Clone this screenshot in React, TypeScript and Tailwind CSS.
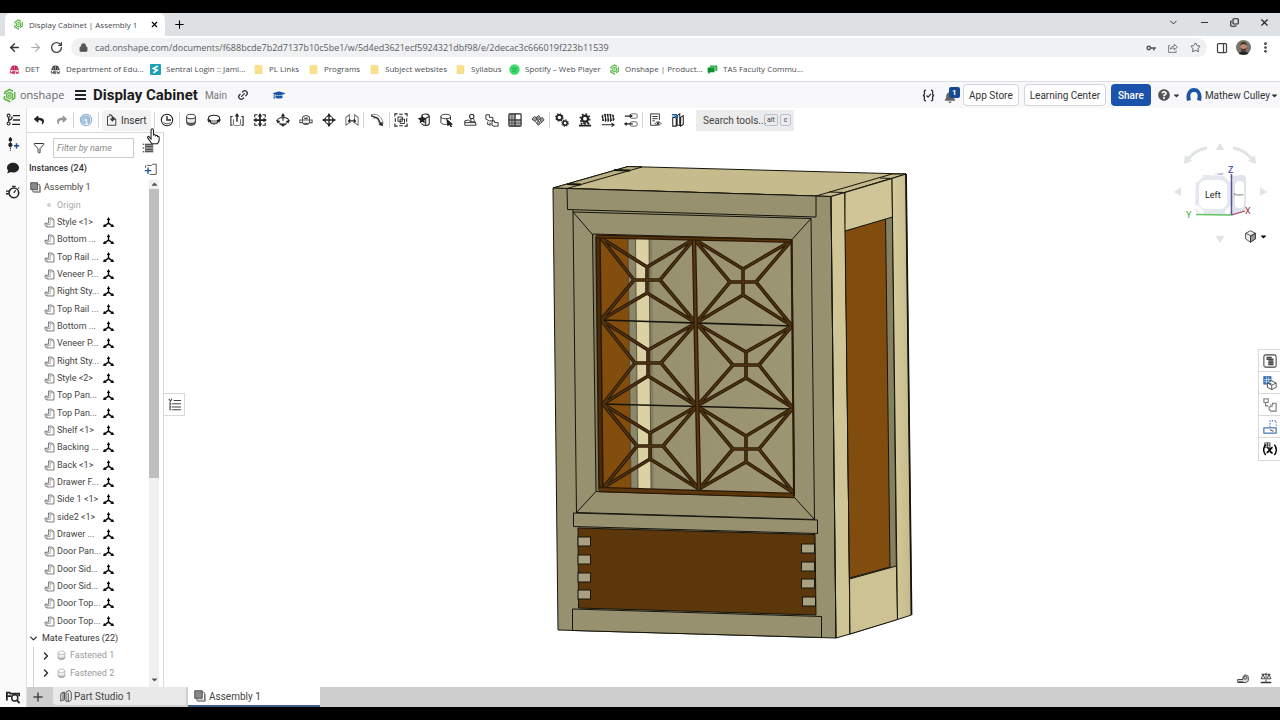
import type { ReactNode } from 'react';
import {
  ArrowLeft,
  ArrowRight,
  ChevronDown,
  ChevronRight,
  Copy,
  Filter,
  Link2,
  Lock,
  Minus,
  MoreVertical,
  PanelRight,
  Plus,
  RotateCw,
  Star,
  X,
} from 'lucide-react';
import { FaBell, FaCaretDown, FaComment, FaGraduationCap, FaQuestionCircle, FaReply, FaShare } from 'react-icons/fa';
import clsx from 'clsx';

type GlyphProps = { children: ReactNode; className?: string };

// All small drawings share a 16x16 grid
function Glyph({ children, className = 'size-[14px]' }: GlyphProps) {
  return (
    <svg viewBox="0 0 16 16" fill="none" stroke="currentColor" strokeWidth="1.2" className={clsx('shrink-0', className)} aria-hidden="true">
      {children}
    </svg>
  );
}

const OnshapeMark = ({ className }: { className?: string }) => (
  <Glyph className={className}>
    <path d="M3 4.5 8 1.5l5.5 3v6L8 14.5l-5.5-3z" stroke="#5fb548" strokeWidth="1.8" strokeDasharray="10 2" />
    <path d="M8 4.7 11 6.4v3.4L8 11.5 5 9.8V6.4z" stroke="#5fb548" strokeWidth="1.5" />
    <circle cx="8" cy="8" r="1" stroke="#5fb548" />
  </Glyph>
);

const WaratahIcon = ({ color }: { color: string }) => (
  <Glyph className="size-[11px]">
    <path d="M2 9c0-5 3-7 6-7s6 2 6 7z" fill={color} stroke="none" />
    <path d="M5 8 4 5M8 8V3M11 8l1-3" stroke="#fff" strokeWidth=".7" />
    <path d="M2 14v-3.5L5 14v-3.5M6.5 14v-3.5H9M6.5 12.2H9M6.5 14H9M10 10.5l1 3.5 1-2.5 1 2.5 1-3.5" stroke={color} />
  </Glyph>
);

const FolderIcon = () => (
  <Glyph className="size-[11px]">
    <path d="M3 2h9l1 1v11H3z" fill="#fbe08a" stroke="#f0d37a" strokeWidth=".8" />
  </Glyph>
);

const bookmarks = [
  { name: 'DET', width: 'w-[41px]', icon: <WaratahIcon color="#c4164a" /> },
  { name: 'Department of Edu...', width: 'w-[100px]', icon: <WaratahIcon color="#444" /> },
  {
    name: 'Sentral Login :: Jami...',
    width: 'w-[103px]',
    icon: (
      <Glyph className="size-[11px]">
        <rect width="16" height="16" rx="1.5" fill="#1ba0b8" stroke="none" />
        <path d="M11.5 3 5 6.5l5.5 2.5L5 13" stroke="#fff" strokeWidth="2.4" />
      </Glyph>
    ),
  },
  { name: 'PL Links', width: 'w-[55px]', icon: <FolderIcon /> },
  { name: 'Programs', width: 'w-[61px]', icon: <FolderIcon /> },
  { name: 'Subject websites', width: 'w-[86px]', icon: <FolderIcon /> },
  { name: 'Syllabus', width: 'w-[54px]', icon: <FolderIcon /> },
  {
    name: 'Spotify – Web Player',
    width: 'w-[100px]',
    icon: (
      <Glyph className="size-[11px]">
        <circle cx="8" cy="8" r="7.5" fill="#3ddc6b" stroke="none" />
        <path d="M4 6.3c3-.8 5.5-.6 8 .7M4.500 8.700c2.5-.6 4.600-.4 6.500.6M5 11c2-.4 3.500-.3 5 .5" stroke="#25a84c" />
      </Glyph>
    ),
  },
  { name: 'Onshape | Product...', width: 'w-[98px]', icon: <OnshapeMark className="size-[11px]" /> },
  {
    name: 'TAS Faculty Commu...',
    width: 'w-[100px]',
    icon: (
      <Glyph className="size-[11px]">
        <path d="M4 2h11v8h-3V5H4z" fill="#2fb34a" stroke="none" />
        <path d="M1 5h10v7H5l-3 3v-3H1z" fill="#0c8f2c" stroke="none" />
      </Glyph>
    ),
  },
];

const Cylinder = () => (
  <>
    <path d="M3 4v7c0 4 10 4 10 0V4" fill="#e8e8e8" strokeWidth="1" />
    <path d="M3 9c1 3 9 3 10 0v2c0 4-10 4-10 0z" fill="#555" stroke="none" />
    <ellipse cx="8" cy="4" rx="5" ry="2.5" fill="#fff" strokeWidth="1" />
  </>
);

type Tool = { name: string; art: ReactNode };

const mateTools: Tool[] = [
  { name: 'Fastened', art: <Cylinder /> },
  {
    name: 'Revolute',
    art: (
      <>
        <ellipse cx="8" cy="6" rx="6.5" ry="3.5" />
        <path d="M4 8v3c1 2 7 2 8 0V8" fill="#aaa" />
        <path d="M0 7l2 4 3-3zM16 7l-2 4-3-3z" fill="currentColor" stroke="none" />
      </>
    ),
  },
  {
    name: 'Slider',
    art: (
      <>
        <path d="M3 4H1v10h2M13 4h2v10h-2" />
        <path d="M4 7v6c1 2 7 2 8 0V7" stroke="#777" />
        <path d="M8 2v8" strokeWidth="1.6" />
        <path d="M8 0 5.5 4h5z" fill="currentColor" stroke="none" />
      </>
    ),
  },
  {
    name: 'Planar',
    art: (
      <>
        <path d="M2 5V2h3M11 2h3v3M14 11v3h-3M5 14H2v-3" strokeWidth="1.2" />
        <path d="M8 2v12M2 8h12" strokeWidth="2" />
        <path d="M8 0 5.5 4h5zM8 16l-2.500-4h5zM0 8l4-2.500v5zM16 8l-4-2.500v5z" fill="currentColor" stroke="none" />
      </>
    ),
  },
  {
    name: 'Cylindrical',
    art: (
      <>
        <path d="M1.5 9c0-5 13-5 13 0M4 11c1 4 7 4 8 0M8 3v6" />
        <path d="M8 0 5.5 4h5zM0 8l2 4 3-3zM16 8l-2 4-3-3zM5.5 12h5L8 16z" fill="currentColor" stroke="none" />
      </>
    ),
  },
  {
    name: 'Pin slot',
    art: (
      <g stroke="#555">
        <path d="M4 5c2-3 6-3 8 0v3H4zM1 8h3v3H1zM12 8h3v3h-3zM4 11c2 3 6 3 8 0" />
        <path d="M6 6h4M6 12h4" strokeWidth="2" />
      </g>
    ),
  },
  {
    name: 'Ball',
    art: (
      <>
        <circle cx="8" cy="8" r="4.5" />
        <path d="M8 1v14M1 8h14" strokeWidth="1.5" />
        <path d="M8 0 6 3.500h4zM8 16l-2-3.500h4zM0 8l3.500-2v4zM16 8l-3.500-2v4z" fill="currentColor" stroke="none" />
      </>
    ),
  },
  {
    name: 'Parallel',
    art: (
      <>
        <path d="M1 14V5l4-3v9zM15 14V5l-4-3v9z" stroke="#777" />
        <path d="M4 9h8M6 7 4 9l2 2M10 7l2 2-2 2" />
      </>
    ),
  },
];

const groupTools: Tool[] = [
  {
    name: 'Group',
    art: (
      <>
        <path d="M1 4V1h3M12 1h3v3M15 12v3h-3M4 15H1v-3M6 1.500h4M6 14.500h4M1.500 6v4M14.500 6v4" strokeWidth="1.2" />
        <path d="M4.500 4.500h5v5h-5zM7 7h5v5H7z" strokeWidth="1" />
      </>
    ),
  },
  {
    name: 'Mate connector',
    art: (
      <>
        <path d="M5 3c3-3 9-2 9 1v8c0 3-7 3-9 0" />
        <path d="M10 6l4-2M10 6v8" />
        <path d="M6 2l1.500 3L11 6 8.500 8.500 9 12l-3-2-3 2 .5-3.500L1 6l3.500-1z" fill="currentColor" stroke="none" />
      </>
    ),
  },
  {
    name: 'Select other',
    art: (
      <>
        <path d="M1 4v7c1 2 6 3 9 1M12 8V4" strokeWidth="1" />
        <ellipse cx="6.5" cy="4" rx="5.5" ry="2.5" strokeWidth="1" />
        <path d="M7 6l8 7-2.500.3L14 16l-2 .4-1-2.700L8.500 15z" fill="currentColor" stroke="none" />
      </>
    ),
  },
  {
    name: 'Snap',
    art: (
      <>
        <circle cx="10" cy="4" r="2.5" />
        <path d="M9 6v4M12 6l1 3M2 14V9l4-1 3 2h5l1 4zM2 11h12" strokeWidth="1" />
      </>
    ),
  },
  {
    name: 'Replicate',
    art: (
      <>
        <path d="M1 2h4v3h4v4H5L1 7zM8 9h3v2h4v4H9l-1-2z" strokeWidth="1" />
        <path d="M3 10v3h3M5 11l2 2-2 2" strokeWidth="1" />
      </>
    ),
  },
  {
    name: 'Linear pattern',
    art: (
      <>
        <rect x="1" y="1" width="14" height="14" rx="1" fill="#aaa" />
        <path d="M9 2h5v5H9z" fill="#fff" stroke="none" />
        <path d="M8 1v14M1 8h14" />
        <path d="M4.500 1v14M1 11.500h14" strokeWidth=".6" />
      </>
    ),
  },
  {
    name: 'Exploded view',
    art: (
      <g stroke="#444" strokeWidth="1">
        <path d="M1 7l3-3 3 2-2 4zM6 5l3-2 2 3-3 3zM10 7l3-2 2 3-3 3zM6 11l3-2 2 3-3 2z" fill="#999" />
      </g>
    ),
  },
];

const relationTools: Tool[] = [
  {
    name: 'Gear relation',
    art: (
      <>
        <circle cx="5" cy="5" r="3" strokeWidth="2" />
        <circle cx="5" cy="5" r="4.2" strokeDasharray="1.6 1.7" />
        <circle cx="11.5" cy="11.5" r="2.4" strokeWidth="1.8" />
        <circle cx="11.5" cy="11.5" r="3.7" strokeDasharray="1.5 1.4" />
      </>
    ),
  },
  {
    name: 'Rack and pinion',
    art: (
      <>
        <circle cx="8" cy="6.5" r="3.4" strokeWidth="2.4" />
        <circle cx="8" cy="6.5" r="5.4" strokeWidth="1.8" strokeDasharray="2 2.2" />
        <path d="M1 14.500h14M3 12h2M7 12h2M11 12h2" strokeWidth="2" />
      </>
    ),
  },
  {
    name: 'Screw relation',
    art: (
      <>
        <path d="M1 3l2 6M4 1l2 8M7 1l2 8M10 1l2 8M13 2l2 6M2 2v7M5 1v9M8 1v9M11 1v9M14 2v7" strokeWidth="1.3" />
        <path d="M1 13.500h13M12 11.500l3 2-3 2" />
      </>
    ),
  },
  {
    name: 'Linear relation',
    art: (
      <g stroke="#555">
        <rect x="7" y="1" width="8" height="5" rx="1.5" strokeWidth="1" />
        <rect x="7" y="10" width="8" height="5" rx="1.5" strokeWidth="1" />
        <path d="M1 3.500h8M1 12.500h9M7 2l2 1.500L7 5M3 11l-2 1.500L3 14" stroke="#222" strokeWidth="1.4" />
      </g>
    ),
  },
];

const viewTools: Tool[] = [
  {
    name: 'Named positions',
    art: (
      <>
        <path d="M10 14H3V1h10v7M5 4h6M5 6.500h6M5 9h3" strokeWidth="1" />
        <path d="M8 12c2-2.500 5-2.500 7 0-2 2.500-5 2.500-7 0z" strokeWidth="1" />
        <circle cx="11.5" cy="12" r=".8" />
      </>
    ),
  },
  {
    name: 'Display states',
    art: (
      <>
        <path d="M2 5h4v10H2zM7 3l3-2v13H7zM11 5l3-2v10l-3 2z" />
        <path d="M1 2h5v4M4 4l2 2 2-2" stroke="#1b5faa" strokeWidth="1.5" />
      </>
    ),
  },
];

const ToolButton = ({ name, art, className = 'flex-1' }: Tool & { className?: string }) => (
  <button type="button" title={name} aria-label={name} className={clsx('flex h-5 items-center justify-center text-[#222]', className)}>
    <Glyph>{art}</Glyph>
  </button>
);

const Divider = () => <span className="h-4 w-px shrink-0 bg-[#d4d4d4]" />;

const instances = [
  'Style <1>', 'Bottom ...', 'Top Rail ...', 'Veneer P...', 'Right Sty...', 'Top Rail ...', 'Bottom ...', 'Veneer P...',
  'Right Sty...', 'Style <2>', 'Top Pan...', 'Top Pan...', 'Shelf <1>', 'Backing ...', 'Back <1>', 'Drawer F...',
  'Side 1 <1>', 'side2 <1>', 'Drawer ...', 'Door Pan...', 'Door Sid...', 'Door Sid...', 'Door Top...', 'Door Top...',
];

const PartIcon = () => (
  <Glyph className="size-[11px] text-[#555]">
    <path d="M6.500 1.500h5l3 2.500v10.500H4.500L1.500 12.500V9h5z" strokeWidth="1.1" />
    <path d="M6.500 1.500 9 4h5.500M9 4v7H4.500v3.500M1.500 9l3 2" strokeWidth=".7" />
  </Glyph>
);

const MateIcon = () => (
  <Glyph className="size-[11px] text-black">
    <path d="M8 3v6M8 9l-5 3.500M8 9l5 3.500" strokeWidth="2" />
    <path d="M5.500 4.500 8 0l2.500 4.500zM0 14.500 1.500 10l4 4zM16 14.500 14.500 10l-4 4z" fill="currentColor" stroke="none" />
  </Glyph>
);

const AssemblyIcon = ({ className = 'size-[11px]' }: { className?: string }) => (
  <Glyph className={clsx('text-[#444]', className)}>
    <path d="M1 1h10v10H1z" fill="#888" />
    <path d="M3.500 11v2.500H14V3.500h-3M5 13.500V15h10V6h-1" strokeWidth=".9" />
  </Glyph>
);

const BrowserChrome = () => (
  <div className="shrink-0 font-['Open_Sans',sans-serif]">
    <div className="flex h-[23px] items-stretch bg-[#dee1e3] pl-[5px]">
      <div className="flex w-40 items-center rounded-t-md bg-white pr-1.5 pl-2">
        <OnshapeMark className="size-[11px]" />
        <span className="ml-[5px] flex-1 truncate text-[8px] text-[#45484c]">Display Cabinet | Assembly 1</span>
        <button type="button" aria-label="Close tab"><X className="size-[9px]" strokeWidth={3} /></button>
      </div>
      <button type="button" aria-label="New tab" className="ml-2"><Plus className="size-[13px]" strokeWidth={2} /></button>
      <div className="ml-auto flex items-center gap-[20px] pr-[10px] pb-1 text-[#222]">
        <button type="button" aria-label="Search tabs"><ChevronDown className="size-[11px]" /></button>
        <button type="button" aria-label="Minimize"><Minus className="size-[11px]" /></button>
        <button type="button" aria-label="Restore"><Copy className="size-[9px] -scale-x-100 rotate-180" strokeWidth={3} /></button>
        <button type="button" aria-label="Close"><X className="size-[11px]" strokeWidth={2.5} /></button>
      </div>
    </div>
    <div className="flex h-[23px] items-center bg-white pr-2 pl-2">
      <button type="button" aria-label="Back"><ArrowLeft className="size-[13px] text-[#333]" strokeWidth={2.5} /></button>
      <button type="button" aria-label="Forward" className="ml-2"><ArrowRight className="size-[13px] text-[#aaa]" /></button>
      <button type="button" aria-label="Reload" className="ml-2"><RotateCw className="size-[13px] text-[#444]" strokeWidth={2.5} /></button>
      <div className="ml-2 flex h-[19px] flex-1 items-center rounded-full bg-[#eff1f3] pr-[6px] pl-2 text-[#555]">
        <Lock className="size-[9px] fill-[#555]" strokeWidth={3} />
        <input
          aria-label="Address"
          readOnly
          value="cad.onshape.com/documents/f688bcde7b2d7137b10c5be1/w/5d4ed3621ecf5924321dbf98/e/2decac3c666019f223b11539"
          className="ml-[7px] min-w-0 flex-1 bg-transparent text-[9px] text-[#5a5d61] outline-none"
        />
        <Glyph className="size-[10px]">
          <circle cx="4.5" cy="8" r="2.7" strokeWidth="2.4" />
          <path d="M8 8h8M12.500 8v4" strokeWidth="2.4" />
        </Glyph>
        <Glyph className="ml-3 size-[10px]">
          <path d="M3 4H1v11h12v-3M4 10c0-4 3-5 6-5V2l5 4.500-5 4.500V8c-3 0-5 0-6 2z" />
        </Glyph>
        <Star className="ml-3 size-[11px]" />
      </div>
      <PanelRight className="ml-[9px] size-[12px] text-[#444]" strokeWidth={2.5} />
      <svg viewBox="0 0 16 16" className="ml-[8px] size-[15px]" aria-label="Profile">
        <circle cx="8" cy="8" r="8" fill="#77766d" />
        <path d="M3 15c0-4 10-4 10 0l-5 1z" fill="#23262c" />
        <ellipse cx="8" cy="7.5" rx="3.3" ry="4.3" fill="#c58b70" />
        <path d="M4.800 8c0 6 6.400 6 6.400 0-1 2-5.400 2-6.400 0z" fill="#5a3626" />
        <path d="M4.500 6c0-5 7-5 7 0-2-2-5-2-7 0z" fill="#43302a" />
      </svg>
      <MoreVertical className="ml-2 size-[13px] text-[#333]" strokeWidth={3} />
    </div>
    <nav className="flex h-[23px] items-center border-b border-[#dcdde0] bg-white pb-[2px] pl-[9px] text-[8px] text-[#4a4d51]">
      {bookmarks.map((b) => (
        <a key={b.name} href="#" className={clsx('flex shrink-0 items-center gap-[5px] whitespace-nowrap', b.width)}>
          {b.icon}
          {b.name}
        </a>
      ))}
    </nav>
  </div>
);

const DocumentHeader = () => (
  <header className="flex h-[26px] shrink-0 items-center bg-[#f8f8fb] pl-[2px] text-[#333]">
    <OnshapeMark className="size-[15px]" />
    <span className="ml-[3px] w-[47px] font-['Open_Sans',sans-serif] text-[11px] text-[#666]">onshape</span>
    <button type="button" aria-label="Menu" className="ml-2 flex w-[11px] flex-col gap-[2px]">
      <span className="h-[2px] bg-[#222]" />
      <span className="h-[2px] bg-[#222]" />
      <span className="h-[2px] bg-[#222]" />
    </button>
    <h1 className="ml-[7px] text-[15px] font-bold whitespace-nowrap text-[#1c1c1c]">Display Cabinet</h1>
    <span className="ml-[7px] text-[10px] text-[#777]">Main</span>
    <Link2 className="ml-[10px] size-[12px] -rotate-45" strokeWidth={2.5} />
    <FaGraduationCap className="ml-6 size-[12px] text-[#1b55a5]" />
    <div className="ml-auto flex items-center">
      <Glyph className="size-[13px]">
        <path d="M5 1.500c-3 0-2 2-2 4S2 8 1 8c1 0 2 .5 2 2.500s-1 4 2 4M11 1.500c3 0 2 2 2 4s1 2.500 2 2.500c-1 0-2 .5-2 2.500s1 4-2 4M5.500 8l2 2L11 6" strokeWidth="1.6" />
      </Glyph>
      <button type="button" aria-label="Notifications" className="relative ml-[9px] flex size-[16px] items-center">
        <FaBell className="mt-1 size-[12px] text-[#666]" />
        <span className="absolute top-0 right-0 flex size-[11px] items-center justify-center rounded-[2px] bg-[#184a91] text-[8px] font-bold text-white">1</span>
      </button>
      <button type="button" className="ml-[3px] h-[22px] w-14 rounded border border-[#d5d6d9] bg-white text-[10px]">App Store</button>
      <button type="button" className="ml-[5px] h-[22px] w-[82px] rounded border border-[#d5d6d9] bg-white text-[10px]">Learning Center</button>
      <button type="button" className="ml-[5px] h-[22px] w-10 rounded bg-[#1b52ab] text-[10px] font-medium text-white">Share</button>
      <button type="button" aria-label="Help" className="ml-[7px] flex items-center gap-[2px]">
        <FaQuestionCircle className="size-[12px] text-[#555]" />
        <FaCaretDown className="size-[9px]" />
      </button>
      <button type="button" className="ml-[5px] flex items-center text-[10px] whitespace-nowrap">
        <Glyph className="size-[16px]">
          <path d="M1 14C-1 6 3 1 8 1s9 5 7 13l-4-1c2-7-1-8-3-8s-5 1-3 8z" fill="#1c55a8" stroke="none" />
        </Glyph>
        <span className="ml-[3px]">Mathew Culley</span>
        <FaCaretDown className="mr-px size-[9px]" />
      </button>
    </div>
  </header>
);

const Toolbar = () => (
  <div className="flex h-6 shrink-0 items-center bg-white">
    <button type="button" aria-label="Undo" className="flex w-[23px] justify-center"><FaReply className="size-[10px] text-[#222]" /></button>
    <button type="button" aria-label="Redo" className="flex w-[23px] justify-center"><FaShare className="size-[10px] text-[#999]" /></button>
    <Divider />
    <button type="button" aria-label="Update" className="flex w-6 justify-center text-[#93b5d3]">
      <Glyph>
        <circle cx="8" cy="8" r="6.5" fill="#e4eef6" />
        <path d="M7 12.500a4.500 4.500 0 1 1 4-1.500M8 10.500a2.500 2.500 0 1 1 2-1.200" strokeWidth="1.5" />
        <path d="M9 9l3.500 1-2 3z" fill="currentColor" stroke="none" />
      </Glyph>
    </button>
    <Divider />
    <button type="button" className="mx-[3px] flex h-[21px] w-[49px] items-center gap-[3px] rounded-sm bg-[#f2f2f2] pl-1 text-[10px] text-[#333]">
      <Glyph className="size-[12px]">
        <path d="M5 3H2v12h11V7l-3-3M10 4v3h3" />
        <path d="M4 1c4 0 5 2 4.500 6M6 6l2.500 3L11 6" strokeWidth="1.6" />
      </Glyph>
      Insert
    </button>
    <Divider />
    <ToolButton
      name="Mate history"
      className="w-6"
      art={
        <>
          <circle cx="8" cy="8" r="6.5" />
          <path d="M8 3.500V8h4.500" strokeWidth="1.5" />
          <path d="M4 10.500a5 5 0 0 0 8 0" strokeWidth=".9" />
        </>
      }
    />
    <Divider />
    <div className="flex w-[183px]">{mateTools.map((t) => <ToolButton key={t.name} {...t} />)}</div>
    <Divider />
    <ToolButton
      name="Tangent"
      className="w-[25px]"
      art={
        <>
          <path d="M1 2c8-2 13 3 14 10M3 6c5-1 7 2 8 8" stroke="#777" strokeWidth="1" />
          <path d="M1 3l8 3 4 8" strokeWidth="1.5" />
          <path d="M10 13l5 2-1-5z" fill="currentColor" stroke="none" />
        </>
      }
    />
    <Divider />
    <div className="flex w-[159px]">{groupTools.map((t) => <ToolButton key={t.name} {...t} />)}</div>
    <Divider />
    <div className="flex w-[92px]">{relationTools.map((t) => <ToolButton key={t.name} {...t} />)}</div>
    <Divider />
    <div className="flex w-[46px]">{viewTools.map((t) => <ToolButton key={t.name} {...t} />)}</div>
    <button type="button" className="ml-[7px] flex h-[21px] w-[98px] items-center gap-[2px] bg-[#ececec] pl-[7px] text-[10px] text-[#444]">
      <span className="w-[59px] text-left whitespace-nowrap">Search tools...</span>
      <kbd className="rounded-[2px] border border-[#b8bfca] px-[2px] font-[Roboto] text-[7px]">alt</kbd>
      <kbd className="rounded-[2px] border border-[#b8bfca] px-[3px] font-[Roboto] text-[7px]">c</kbd>
    </button>
  </div>
);

const SideRail = () => (
  <aside className="flex w-[27px] shrink-0 flex-col items-center border-r border-[#dfdfdf] bg-[#fafafa] text-[#222]">
    <button type="button" aria-label="Feature list" className="flex h-6 items-center">
      <Glyph>
        <circle cx="3" cy="3" r="1.7" />
        <circle cx="3" cy="12" r="1.7" />
        <path d="M3 5v5M3 8c3 0 4-1 4-4M8 3h8M8 8h8M7 13h9" strokeWidth="1.5" />
      </Glyph>
    </button>
    <button type="button" aria-label="Add mate" className="flex h-6 items-center">
      <Glyph>
        <path d="M5 0v16" strokeDasharray="2 1" />
        <circle cx="5" cy="3" r="1.5" fill="currentColor" />
        <circle cx="5" cy="9" r="1.8" fill="currentColor" />
        <path d="M9 10h6M12 7v6" stroke="#1d4f91" strokeWidth="1.8" />
      </Glyph>
    </button>
    <button type="button" aria-label="Comments" className="flex h-6 items-center"><FaComment className="size-[12px]" /></button>
    <button type="button" aria-label="History" className="flex h-6 items-center">
      <Glyph>
        <circle cx="9" cy="9" r="5.5" strokeWidth="1.8" />
        <path d="M7 1.500h4M9 9l2-3M14 3l1 1M0 7h4M0 10h3" strokeWidth="1.5" />
      </Glyph>
    </button>
    <button type="button" aria-label="Tab manager" className="mt-auto flex h-5 items-center">
      <Glyph>
        <path d="M1 12V3h4M4 4h11v3M2 7h4" strokeWidth="2" />
        <circle cx="10" cy="9" r="3.5" strokeWidth="1.6" />
        <path d="M12.500 11.500 15.500 15" strokeWidth="2" />
      </Glyph>
    </button>
  </aside>
);

const FastenedRow = ({ name }: { name: string }) => (
  <li className="ml-[6px] flex min-h-0 items-center border-l border-[#d5d5d5] pl-[6px] text-[#999]">
    <ChevronRight className="size-[12px] text-[#333]" strokeWidth={3} />
    <Glyph className="ml-[4px] size-[11px] text-[#aaa]">
      <path d="M3 4v7c0 4 10 4 10 0V4" fill="#eee" />
      <path d="M3 9c1 3 9 3 10 0v2c0 4-10 4-10 0z" fill="#aaa" stroke="none" />
      <ellipse cx="8" cy="4" rx="5" ry="2.5" fill="#fff" strokeWidth="1" />
    </Glyph>
    <span className="ml-[3px]">{name}</span>
  </li>
);

const InstancePanel = () => (
  <section className="relative flex w-[137px] shrink-0 flex-col border-t border-r border-[#d9d9d9] bg-white text-[9px] text-[#444]">
    <div className="flex h-[29px] shrink-0 items-center pl-[6px]">
      <Filter className="size-[12px] text-[#333]" />
      <input
        aria-label="Filter by name"
        placeholder="Filter by name"
        className="ml-2 h-5 w-[81px] border border-[#ccc] px-[3px] text-[9px] italic outline-none placeholder:text-[#888]"
      />
      <button type="button" aria-label="List options" className="ml-[8px]">
        <Glyph className="size-[12px] text-[#222]">
          <path d="M1 3h2M1 8h2M1 13h2M4 3h11M4 8h11M4 13h11M4 5.500h11M4 10.500h11" strokeWidth="1.4" />
        </Glyph>
      </button>
    </div>
    <div className="flex h-[17px] shrink-0 items-center justify-between pr-[6px] pb-[3px] pl-[2px]">
      <h2 className="font-medium text-[#333]">Instances (24)</h2>
      <button type="button" aria-label="Add folder">
        <Glyph className="size-[13px]">
          <path d="M4 3h5l1.500-1.500H15V14H7M2 3v3" stroke="#555" />
          <path d="M1 9.500h8M5 5.500v8" stroke="#1d4f91" strokeWidth="1.6" />
        </Glyph>
      </button>
    </div>
    <div className="flex min-h-0 flex-1">
      <div className="flex min-h-0 flex-1 flex-col overflow-hidden">
        <ul className="grid min-h-0 flex-1 auto-rows-fr leading-[17px]">
          <li className="flex min-h-0 items-center gap-[3px] pl-[3px]">
            <AssemblyIcon />
            Assembly 1
          </li>
          <li className="flex min-h-0 items-center pl-[20px] text-[#aaa]">
            <span className="size-[4px] rounded-full border border-[#ccc] bg-[#ddd]" />
            <span className="ml-[6px]">Origin</span>
          </li>
          {instances.map((name, i) => (
            <li key={i} className="flex min-h-0 items-center pl-[17px]">
              <PartIcon />
              <span className="ml-[2px] w-[46px] whitespace-nowrap">{name}</span>
              <MateIcon />
            </li>
          ))}
          <li className="flex min-h-0 items-center gap-[3px] pl-px text-[#333]">
            <ChevronDown className="size-[11px]" strokeWidth={3} />
            Mate Features (22)
          </li>
          <FastenedRow name="Fastened 1" />
          <FastenedRow name="Fastened 2" />
        </ul>
        <div className="ml-[6px] h-[5px] shrink-0 border-l border-[#d5d5d5]" />
      </div>
      <div className="mt-px mr-[4px] flex w-[10px] flex-col bg-[#f0f0f0] text-[#555]">
        <FaCaretDown className="size-[9px] rotate-180 self-center" />
        <div className="h-[57%] bg-[#bebebe]" />
        <FaCaretDown className="mt-auto mb-[3px] size-[9px] self-center" />
      </div>
    </div>
    <svg viewBox="0 0 16 20" className="absolute -top-[5px] right-[3px] z-10 h-[17px] w-[13px]" aria-hidden="true">
      <path d="M6 19 1 12c-1-2 1-3 2-1l2 2V2c0-2 3-2 3 0v6c1-1 2.500 0 2.500 1 1-1 2.500 0 2.500 1 1-.6 2 .2 2 1.200V15l-2 4z" fill="#fff" stroke="#222" strokeWidth="1.3" />
    </svg>
    <button type="button" aria-label="Collapse list" className="absolute top-[260px] left-full z-10 flex h-[23px] w-[22px] items-center justify-center border border-[#d9d9d9] bg-white">
      <Glyph className="size-[13px] text-[#444]">
        <path d="M1 1l2 3 2-3M7 3h9M5 7h11M5 11h11M5 14.500h11M2.500 5v10M2 7h2M2 11h2M2 14.500h2" strokeWidth="1.3" />
      </Glyph>
    </button>
  </section>
);

// Lattice nodes: [left, mid, right] for each horizontal bar of the door
const nodes = [
  [[601, 238], [694, 239], [791, 241]],
  [[601, 320], [696, 323], [792, 326]],
  [[603, 404], [697, 406], [793, 408]],
  [[604, 487], [699, 489], [794, 493]],
];
const centres = [
  [[647, 280], [743, 282]],
  [[648, 363], [746, 365]],
  [[650, 446], [746, 449]],
];

const lattice = centres
  .flatMap((row, r) =>
    row.map(([cx, cy], c) => {
      const corners = [nodes[r][c], nodes[r][c + 1], nodes[r + 1][c], nodes[r + 1][c + 1]];
      const spokes = corners.map(([x, y]) => {
        const sx = x < cx ? -13 : 13;
        const sy = y < cy ? -13 : 13;
        return `M${x} ${y}L${cx} ${cy + sy}M${x} ${y}L${cx + sx} ${cy}`;
      });
      return `${spokes.join('')}M${cx - 13} ${cy}h26M${cx} ${cy - 13}v26`;
    }),
  )
  .join('');

const leftJoints = [537, 555, 573, 590];
const rightJoints = [544, 562, 579, 597];

const Cabinet = () => (
  <svg viewBox="164 132 1116 555" className="absolute inset-0 size-full" role="img" aria-label="Display cabinet model">
    <defs>
      <linearGradient id="side" x1="0" x2="1">
        <stop offset="0" stopColor="#d6cb9d" />
        <stop offset="1" stopColor="#c5ba8c" />
      </linearGradient>
      <linearGradient id="back" x1="0" x2="1">
        <stop offset="0" stopColor="#827c5e" />
        <stop offset=".3" stopColor="#979170" />
        <stop offset="1" stopColor="#9d9673" />
      </linearGradient>
    </defs>
    <g stroke="#16150d" strokeLinejoin="round">
      <path d="M553 188 628 166.500 906 174 831 196.500z" fill="#c5bb8c" />
      <path d="M553 188 628 166.500 642 167 567 188.500z" fill="#b9af82" />
      <path d="M567 184l14 .5M614 170l16 .5" strokeWidth="1.8" />
      <path d="M816 196 892 174 906 174 831 196.500zM829 192l16 .5M880 178l12 .5" fill="#c5bb8c" />
      <path d="M553 188 831 196.500 836 638 558 630z" fill="#979170" />
      <path d="M831 196.500 845 192.500 850 634 836 638z" fill="#d0c597" />
      <path d="M845 192.500 892 178.500 897 619.500 850 634z" fill="#86805f" />
      <path d="M845 231 885.500 218.500 890 567 849.500 578z" fill="#804d0f" />
      <path d="M845 192.500 892 178.500 892.500 217 845 231z" fill="#d0c597" />
      <path d="M849.500 579 896.500 566 897.500 619.500 850 634z" fill="#cdc294" />
      <path d="M892 178.500 906 174 911.500 615 897.500 619.500z" fill="url(#side)" />
      <path d="M906 174 911.500 615" strokeWidth="1.8" />

      {/* Front frame and door */}
      <path d="M567 188.500 816 196v21l-248.500-7.500z" fill="#979170" />
      <path d="M573 212 811 218.500 814.500 519.500 576.500 512.500z" fill="#979170" />
      <path d="M573 212l19 22M811 218.500l-19 21M576.500 512.500l19.500-21M814.500 519.500l-20-22" />
      <path d="M573 210v2M831 196.500l5 441.500" />
      <path d="M592.500 234 792 239.500 794.500 497.500 596 491.500z" fill="url(#back)" />
      <g stroke="none">
        <path d="M600 236h28l3 254-28-1z" fill="#824d0d" />
        <path d="M628 236h7.500l2.500 254h-7z" fill="#8c8768" />
        <path d="M635.500 237h13.500l2 253h-13z" fill="#dcd1a5" />
        <path d="M649 238h3l2 252h-3z" fill="#79745a" opacity=".6" />
      </g>
      <path d="M628 237l3 252M635.500 237l2.500 252M649 238l2 252" stroke="#3d3926" strokeWidth=".7" />
      <path d="M601 320l191 6M603 404l190 5" strokeWidth="1.6" />
    </g>
    <g fill="none" strokeLinejoin="round">
      <path d={lattice} stroke="#2b1a08" strokeWidth="3.6" />
      <path d={lattice} stroke="#553811" strokeWidth="1.3" />
      <path d="M694 239l5 251" stroke="#2b1a08" strokeWidth="4.5" />
      <path d="M694 239l5 251" stroke="#5c3a10" strokeWidth="2" />
      <path d="M598 236l3 254" stroke="#2b1a08" strokeWidth="5.5" />
      <path d="M598 236l3 254" stroke="#4b2d09" strokeWidth="2.5" />
      <path d="M596 236.500 792 241" stroke="#2b1a08" strokeWidth="4" />
      <path d="M596 236.500 792 241" stroke="#593509" strokeWidth="1.3" />
      <path d="M599 489.500 794.500 495.500" stroke="#2b1a08" strokeWidth="5.5" />
      <path d="M599 489.500 794.500 495.500" stroke="#5b370b" strokeWidth="3.2" />
      <path d="M791.500 240l2.500 256" stroke="#2b1a08" strokeWidth="2" />
    </g>
    <g stroke="#16150d">
      <path d="M578 528 815 534.500 816 615 578.500 608z" fill="#5c370b" />
      <path d="M573.500 513 817.500 520v13.500L573.500 526.500z" fill="#979170" />
      <path d="M572.500 609 821.500 616.500v21L572.500 630.500z" fill="#979170" />
      <g fill="#a8a181">
        {leftJoints.map((y) => <rect key={y} x="578" y={y} width="12.500" height="9" />)}
        {rightJoints.map((y, i) => <rect key={y} x={i === 3 ? 802.5 : 801.5} y={y} width="13" height="9" />)}
      </g>
    </g>
  </svg>
);

const ViewCube = () => (
  <svg viewBox="0 0 100 110" className="absolute top-[6px] right-[10px] w-[100px]" role="img" aria-label="View cube">
    <g fill="#e0e4e7">
      <path d="M50 5l4.500 7h-9zM50 105l4.500-7h-9zM4 54l7-5v9zM97 54l-7-5v9z" />
      <path d="M14 26l1-9 7 6zM86 26l-1-9-7 6z" />
    </g>
    <path d="M18 21Q27 11 37 10M82 21Q73 11 63 10" fill="none" stroke="#e0e4e7" strokeWidth="3" />
    <g transform="translate(0 2)">
      <path d="M26 38q2-3 8-3l28 1v40l-30-2q-7 0-7-7z" fill="#e5e8ef" />
      <path d="M62 36l11-1q3 1 3 4v29q0 3-3 4l-11 4z" fill="#dfe3eb" />
      <path d="M44 34l10-1-2 2z" fill="#a9b0c8" />
      <rect x="29" y="40" width="28" height="29" rx="7" fill="#fff" />
      <rect x="65" y="41" width="9" height="27" rx="4" fill="#fff" />
      <path d="M27 40l4-4M27 67l5 5M57 37l4 3M57 72l4-4" stroke="#fff" strokeWidth="4" strokeLinecap="round" />
      <path d="M61.500 34v41" stroke="#55529a" strokeWidth="1.5" />
      <path d="M26 74.500 61.500 75" stroke="#62c462" strokeWidth="1.3" />
      <path d="M61.500 75 75 71" stroke="#a8445c" strokeWidth="1.3" />
      <text x="35" y="58" fontSize="9" fill="#222">Left</text>
      <text x="64" y="56" fontSize="4" fill="#555">Front</text>
      <text x="58" y="33" fontSize="9" fill="#33339a">Z</text>
      <text x="16" y="78" fontSize="9" fill="#3cae3c">Y</text>
      <text x="75" y="74" fontSize="9" fill="#a02840">X</text>
    </g>
  </svg>
);

const dockTools: Tool[] = [
  {
    name: 'Bill of materials',
    art: (
      <>
        <rect x="1" y="1" width="14" height="14" rx="2" />
        <path d="M4 4h6M4 6h8M6 8h6M6 10h6M6 12h6" strokeWidth="1.6" />
      </>
    ),
  },
  {
    name: 'Configurations',
    art: (
      <>
        <path d="M1 1h8v8H1z" fill="#3a78c2" stroke="#2a62a8" />
        <path d="M1 4h8M4 1v8M6.500 1v8M1 6.500h8" stroke="#fff" strokeWidth=".6" />
        <path d="M5 8l5-2.500L15 8v5l-5 2.500L5 13zM5 8l5 2.500L15 8M10 10.500v5" fill="#fff" strokeWidth="1" />
      </>
    ),
  },
  {
    name: 'Display states',
    art: (
      <g stroke="#777">
        <rect x="1" y="1" width="5" height="4" />
        <path d="M3 5v4h3M8 8h3V6h4v9H9l-2-2v-3h4" />
      </g>
    ),
  },
  {
    name: 'Exploded views',
    art: (
      <>
        <path d="M8 8V1h7v7" stroke="#3a78c2" strokeDasharray="1.5 1.5" />
        <rect x="1" y="9" width="14" height="6" stroke="#2a62a8" />
        <path d="M8 11l4 2" />
      </>
    ),
  },
];

const SideDock = () => (
  <div className="absolute top-[217px] right-0 flex w-[22px] flex-col divide-y divide-[#d9d9d9] border border-r-0 border-[#d9d9d9] bg-white">
    {dockTools.map((t) => (
      <button key={t.name} type="button" aria-label={t.name} className="flex h-[22px] items-center justify-center text-[#444]">
        <Glyph>{t.art}</Glyph>
      </button>
    ))}
    <button type="button" aria-label="Variables" className="flex h-[22px] items-center justify-center text-black">
      <Glyph>
        <path d="M3 3C0 7 0 11 3 15M13 3c3 4 3 8 0 12" strokeWidth="1.6" />
        <path d="M5 7c3-1 3 7 6 5M11 6c-2 0-4 6-7 6" strokeWidth="2" />
        <path d="M2 1h6v5H2zM2 3.500h6M5 1v5" strokeWidth=".8" />
      </Glyph>
    </button>
  </div>
);

const Canvas = () => (
  <main className="relative min-w-0 flex-1 bg-white">
    <Cabinet />
    <ViewCube />
    <button type="button" aria-label="View options" className="absolute top-[98px] right-[12px] flex items-center gap-[2px]">
      <Glyph className="size-[13px] text-[#333]">
        <path d="M2 4l6-3 6 3v7l-6 4-6-4z" fill="#eee" strokeWidth="1" />
        <path d="M8 8l6-4v7l-6 4z" fill="#999" strokeWidth="1" />
        <path d="M2 4l6 3 6-3M8 7v8" strokeWidth="1" />
      </Glyph>
      <FaCaretDown className="size-[9px] text-black" />
    </button>
    <SideDock />
    <div className="absolute right-[8px] bottom-[3px] flex gap-[11px] text-[#333]">
      <button type="button" aria-label="Measure">
        <Glyph className="size-[12px]">
          <path d="M1 10h7V7c0-4 7-4 7 0v4c0 2-2 3-4 3H1z" fill="#ddd" />
          <circle cx="11" cy="7.5" r="2" />
          <path d="M3 12v2M5 12v2M7 12v2" />
        </Glyph>
      </button>
      <button type="button" aria-label="Mass properties">
        <Glyph className="size-[12px]">
          <path d="M2 3h12M8 1v12M4 3 1.500 9h5zM12 3 9.500 9h5z" />
          <path d="M1 14h14" strokeWidth="2" />
        </Glyph>
      </button>
    </div>
  </main>
);

const TabBar = () => (
  <div className="flex h-5 shrink-0 items-stretch bg-[#cecece] text-[10px] text-[#444]">
    <button type="button" aria-label="New element" className="flex w-[26px] items-center justify-center pr-1">
      <Plus className="size-[14px]" strokeWidth={2.5} />
    </button>
    <button type="button" className="mb-[2px] flex w-[133px] items-center gap-[2px] rounded-bl bg-[#e9e9e9] pl-[7px]">
      <Glyph className="size-[12px]">
        <path d="M1 5l3-2v10l-3 2zM4 3h2v10l-2 1M8 3l3-2h2l2 2v10l-2 2H8zM11 4v11" />
      </Glyph>
      Part Studio 1
    </button>
    <button type="button" className="ml-[2px] flex w-[132px] items-center gap-[3px] border-b-2 border-[#3d5f87] bg-white pl-[6px]">
      <AssemblyIcon className="size-[12px]" />
      Assembly 1
    </button>
  </div>
);

export default function App() {
  return (
    <div className="flex h-screen flex-col overflow-hidden bg-black py-[13px] font-[Roboto,sans-serif]">
      <BrowserChrome />
      <DocumentHeader />
      <div className="flex min-h-0 flex-1 bg-white">
        <SideRail />
        <div className="flex min-w-0 flex-1 flex-col">
          <Toolbar />
          <div className="flex min-h-0 flex-1">
            <InstancePanel />
            <Canvas />
          </div>
          <TabBar />
        </div>
      </div>
    </div>
  );
}
